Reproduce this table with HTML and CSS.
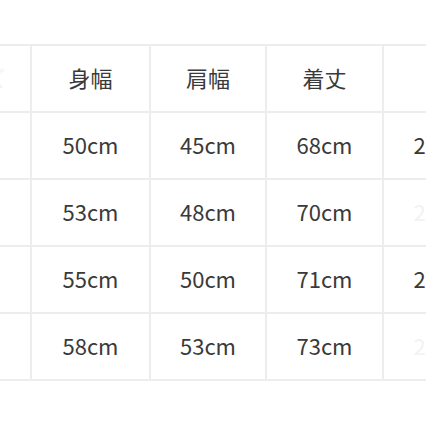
FILE: index.html
```html
<!DOCTYPE html>
<html lang="ja">
<head>
<meta charset="utf-8">
<link rel="stylesheet" href="styles.css">
</head>
<body>
<div class="table">
  <div class="cell ghost">サイズ</div><div class="cell">身幅</div><div class="cell">肩幅</div><div class="cell">着丈</div><div class="cell"></div>
  <div class="cell ghost">S</div><div class="cell">50cm</div><div class="cell">45cm</div><div class="cell">68cm</div><div class="cell">20cm</div>
  <div class="cell ghost">M</div><div class="cell">53cm</div><div class="cell">48cm</div><div class="cell">70cm</div><div class="cell ghost">21cm</div>
  <div class="cell ghost">L</div><div class="cell">55cm</div><div class="cell">50cm</div><div class="cell">71cm</div><div class="cell">22cm</div>
  <div class="cell ghost">XL</div><div class="cell">58cm</div><div class="cell">53cm</div><div class="cell">73cm</div><div class="cell ghost">23cm</div>
</div>
</body>
</html>
```
FILE: styles.css
```css
html, body {
  margin: 0;
  padding: 0;
  background: #ffffff;
  overflow: hidden;
}
body {
  width: 426px;
  height: 426px;
  font-family: "Noto Sans CJK JP", "Noto Sans", sans-serif;
}
.table {
  display: grid;
  grid-template-columns: 117px 119px 116px 117px 117px;
  grid-auto-rows: 67px;
  margin-top: 44px;
  margin-left: -85px;
  width: 586px;
  border-top: 2px solid #ededed;
}
.cell {
  box-sizing: border-box;
  border-right: 2px solid #ededed;
  border-bottom: 2px solid #ededed;
  display: flex;
  align-items: center;
  justify-content: center;
  padding-bottom: 3px;
  font-size: 22px;
  color: #3a3a3a;
}
.ghost {
  color: #f2f2f2;
}
```
